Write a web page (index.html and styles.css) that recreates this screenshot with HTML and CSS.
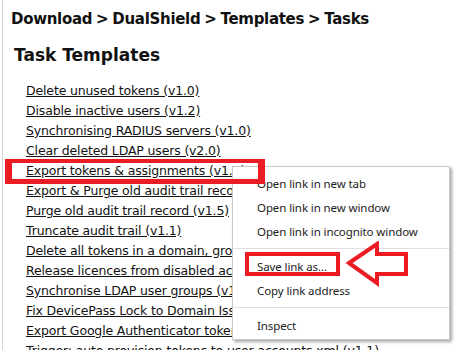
FILE: index.html
```html
<!DOCTYPE html>
<html>
<head>
<meta charset="utf-8">
<link rel="stylesheet" href="styles.css">
</head>
<body>
<div class="page">
  <div class="crumbs">Download &gt; DualShield &gt; Templates &gt; Tasks</div>
  <h2 class="title">Task Templates</h2>
  <ul class="links">
    <li><a href="#">Delete unused tokens (v1.0)</a></li>
    <li><a href="#">Disable inactive users (v1.2)</a></li>
    <li><a href="#">Synchronising RADIUS servers (v1.0)</a></li>
    <li><a href="#">Clear deleted LDAP users (v2.0)</a></li>
    <li><a href="#">Export tokens &amp; assignments (v1.0)</a></li>
    <li><a href="#">Export &amp; Purge old audit trail records (v1.0)</a></li>
    <li><a href="#">Purge old audit trail record (v1.5)</a></li>
    <li><a href="#">Truncate audit trail (v1.1)</a></li>
    <li><a href="#">Delete all tokens in a domain, group or OU (v1.0)</a></li>
    <li><a href="#">Release licences from disabled accounts (v1.0)</a></li>
    <li><a href="#">Synchronise LDAP user groups (v1.0)</a></li>
    <li><a href="#">Fix DevicePass Lock to Domain Issue (v1.0)</a></li>
    <li><a href="#">Export Google Authenticator tokens (v1.0)</a></li>
    <li><a href="#">Trigger: auto provision tokens to user accounts.xml (v1.1)</a></li>
  </ul>
</div>

<div class="menu">
  <div class="item">Open link in new tab</div>
  <div class="item">Open link in new window</div>
  <div class="item">Open link in incognito window</div>
  <div class="sep"></div>
  <div class="item">Save link as...</div>
  <div class="item">Copy link address</div>
  <div class="sep"></div>
  <div class="item">Inspect</div>
</div>

<div class="mark mark-link"></div>
<div class="mark mark-save"></div>
<svg class="arrow" width="70" height="50" viewBox="0 0 70 50">
  <polygon points="4,22 32,3 32,13 61,13 61,33 32,33 32,42" fill="#fff" stroke="#ec1c24" stroke-width="4" stroke-linejoin="miter"/>
</svg>
</body>
</html>
```
FILE: styles.css
```css
html, body {
  margin: 0;
  padding: 0;
  background: #fff;
  overflow: hidden;
}
body {
  width: 462px;
  height: 350px;
  padding-left: 2px;
  box-sizing: border-box;
  font-family: "DejaVu Sans", Verdana, sans-serif;
  color: #111;
}
.page {
  border-left: 1px solid #d4d4d4;
  height: 350px;
  padding-left: 8px;
  padding-top: 9px;
  box-sizing: border-box;
}
.crumbs {
  font-weight: bold;
  font-size: 15px;
  letter-spacing: -0.3px;
  word-spacing: -1px;
  line-height: 20px;
}
.title {
  font-size: 17px;
  line-height: 24px;
  margin: 14px 0 0 3px;
}
.links {
  list-style: none;
  margin: 14px 0 0 15px;
  padding: 0;
  font-size: 12.5px;
  letter-spacing: -0.15px;
  line-height: 20px;
  white-space: nowrap;
}
.links a {
  color: #111;
  text-decoration: underline;
}
.menu {
  position: absolute;
  left: 232px;
  top: 166px;
  width: 218px;
  height: 174px;
  box-sizing: border-box;
  background: #fff;
  border: 1px solid #c9c9c9;
  box-shadow: 2px 2px 3px rgba(0,0,0,0.35);
  padding-top: 5px;
  font-family: "Noto Sans", "Open Sans", sans-serif;
  font-size: 11.5px;
  letter-spacing: -0.1px;
  color: #222;
}
.item {
  height: 24px;
  line-height: 24px;
  padding-left: 24px;
}
.sep {
  height: 1px;
  background: #e0e0e0;
  margin: 4px 0 6px;
}
.mark {
  position: absolute;
  border: 5px solid #ec1c24;
  box-sizing: border-box;
}
.mark-link {
  left: 5px;
  top: 159px;
  width: 260px;
  height: 25px;
  border-width: 4px 7px 5px 7px;
}
.mark-save {
  left: 245px;
  top: 252px;
  width: 95px;
  height: 24px;
  border-width: 4px;
}
.arrow {
  position: absolute;
  left: 345px;
  top: 241px;
}
```
